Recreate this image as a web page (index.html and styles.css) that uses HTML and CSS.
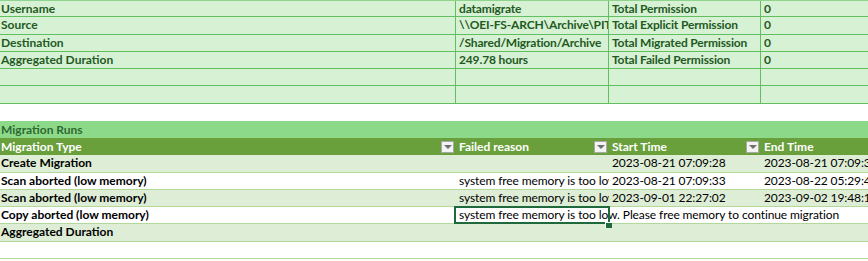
FILE: index.html
```html
<!DOCTYPE html>
<html>
<head>
<meta charset="utf-8">
<link rel="stylesheet" href="styles.css">
</head>
<body>
<div class="sheet">
  <div class="summary">
    <div class="srow">
      <div class="c">Username</div>
      <div class="c v">datamigrate</div>
      <div class="c v">Total Permission</div>
      <div class="c v">0</div>
    </div>
    <div class="srow">
      <div class="c">Source</div>
      <div class="c v">\\OEI-FS-ARCH\Archive\PIT</div>
      <div class="c v">Total Explicit Permission</div>
      <div class="c v">0</div>
    </div>
    <div class="srow">
      <div class="c">Destination</div>
      <div class="c v">/Shared/Migration/Archive</div>
      <div class="c v">Total Migrated Permission</div>
      <div class="c v">0</div>
    </div>
    <div class="srow">
      <div class="c">Aggregated Duration</div>
      <div class="c v">249.78 hours</div>
      <div class="c v">Total Failed Permission</div>
      <div class="c v">0</div>
    </div>
    <div class="srow">
      <div class="c"></div><div class="c v"></div><div class="c v"></div><div class="c v"></div>
    </div>
    <div class="srow">
      <div class="c"></div><div class="c v"></div><div class="c v"></div><div class="c v"></div>
    </div>
  </div>

  <div class="gap"></div>

  <div class="runs">
    <div class="title">Migration Runs</div>
    <div class="row head">
      <div class="hc"><span>Migration Type</span><span class="filter"></span></div>
      <div class="hc"><span>Failed reason</span><span class="filter"></span></div>
      <div class="hc"><span>Start Time</span><span class="filter"></span></div>
      <div class="hc"><span>End Time</span></div>
    </div>
    <div class="row band">
      <div class="d b">Create Migration</div>
      <div class="d"></div>
      <div class="d clip">2023-08-21 07:09:28</div>
      <div class="d">2023-08-21 07:09:33</div>
    </div>
    <div class="row">
      <div class="d b">Scan aborted (low memory)</div>
      <div class="d clip">system free memory is too low. Please free memory to continue migration</div>
      <div class="d clip">2023-08-21 07:09:33</div>
      <div class="d">2023-08-22 05:29:47</div>
    </div>
    <div class="row band">
      <div class="d b">Scan aborted (low memory)</div>
      <div class="d clip">system free memory is too low. Please free memory to continue migration</div>
      <div class="d clip">2023-09-01 22:27:02</div>
      <div class="d">2023-09-02 19:48:15</div>
    </div>
    <div class="row">
      <div class="d b">Copy aborted (low memory)</div>
      <div class="d sel">system free memory is too low. Please free memory to continue migration</div>
      <div class="d"></div>
      <div class="d"></div>
    </div>
    <div class="row band">
      <div class="d b">Aggregated Duration</div>
      <div class="d"></div>
      <div class="d"></div>
      <div class="d"></div>
    </div>
    <div class="row">
      <div class="d"></div><div class="d"></div><div class="d"></div><div class="d"></div>
    </div>
  </div>
</div>
</body>
</html>
```
FILE: styles.css
```css
html, body {
  margin: 0;
  padding: 0;
  background: #ffffff;
}

.sheet {
  width: 868px;
  height: 261px;
  overflow: hidden;
  font-family: Lato, "Liberation Sans", sans-serif;
  font-size: 12px;
}

.summary {
  background: #d6f1d4;
  border-top: 1px solid #8fd48c;
}

.srow {
  display: grid;
  grid-template-columns: 456px 153px 152px 1fr;
  height: 17.25px;
  box-sizing: border-box;
  border-bottom: 1px solid #62bf5f;
}

.srow:first-child {
  height: 16.25px;
}

.c {
  font-weight: 700;
  color: #1f5a22;
  line-height: 16px;
  padding-left: 1px;
  white-space: nowrap;
  overflow: hidden;
}

.c.v {
  padding-left: 3px;
  letter-spacing: -0.15px;
}

.srow .c:nth-child(1),
.srow .c:nth-child(2),
.srow .c:nth-child(3) {
  border-right: 1px solid #62bf5f;
}

.gap {
  height: 17.25px;
}

.title {
  height: 17.25px;
  box-sizing: border-box;
  background: #8dd98a;
  color: #2e6a30;
  font-weight: 700;
  line-height: 17px;
  padding-left: 1px;
}

.row {
  display: grid;
  grid-template-columns: 456px 153px 152px 1fr;
  height: 17.25px;
  box-sizing: border-box;
  border-bottom: 1px solid #b3d99a;
  background: #ffffff;
}

.row.band {
  background: #deedd6;
}

.row.head {
  background: #69a03c;
  border-bottom: none;
}

.hc {
  display: flex;
  align-items: center;
  justify-content: space-between;
  color: #ffffff;
  font-weight: 700;
  padding-left: 3px;
  padding-right: 2px;
  white-space: nowrap;
}

.hc:first-child {
  padding-left: 1px;
}

.filter {
  width: 11px;
  height: 10px;
  background: #f3f3f3;
  border: 1px solid #a8a8a8;
  position: relative;
}

.filter::after {
  content: "";
  position: absolute;
  left: 1.5px;
  top: 3px;
  border-left: 4px solid transparent;
  border-right: 4px solid transparent;
  border-top: 4.5px solid #6f6f6f;
}

.d {
  color: #000000;
  line-height: 16px;
  padding-left: 3px;
  white-space: nowrap;
  letter-spacing: -0.1px;
}

.d.b {
  font-weight: 700;
  padding-left: 1px;
  letter-spacing: 0;
}

.d.clip {
  overflow: hidden;
}

.d.sel {
  position: relative;
  overflow: visible;
}

.d.sel::before {
  content: "";
  position: absolute;
  left: -2px;
  top: -1px;
  width: 156px;
  height: 18px;
  box-sizing: border-box;
  border: 2px solid #1f6a3c;
}

.d.sel::after {
  content: "";
  position: absolute;
  left: 149px;
  top: 15px;
  width: 6px;
  height: 5px;
  background: #1f6a3c;
  border-left: 1px solid #ffffff;
  border-top: 1px solid #ffffff;
}
```
